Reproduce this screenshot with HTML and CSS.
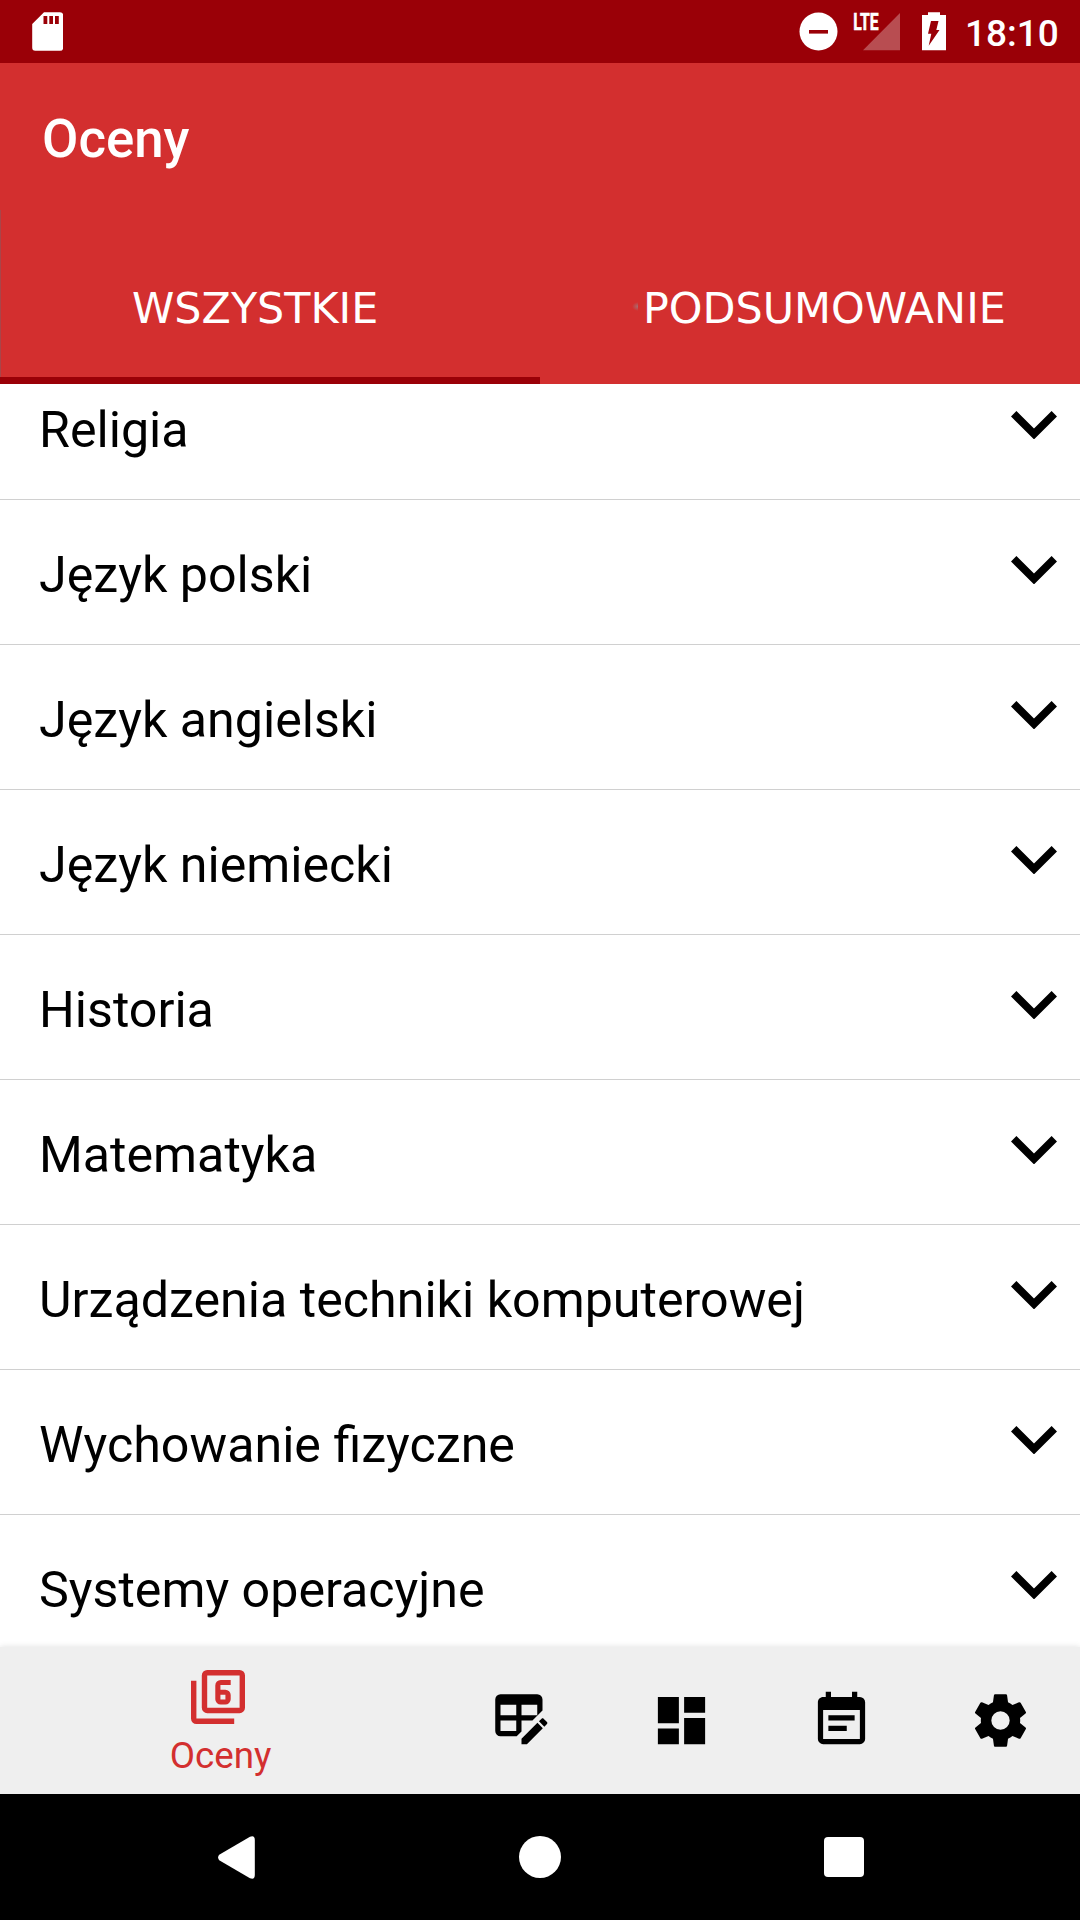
FILE: index.html
```html
<!DOCTYPE html>
<html lang="pl">
<head>
<meta charset="utf-8">
<title>Oceny</title>
<link rel="stylesheet" href="styles.css">
</head>
<body>
<svg class="defs" width="0" height="0" aria-hidden="true">
  <symbol id="chevron" viewBox="6 8.59 12 7.41"><path d="M7.41 8.59 12 13.17l4.59-4.58L18 10l-6 6-6-6z"/></symbol>
</svg>
<div class="screen">
  <header class="status">
    <svg class="status-sd" viewBox="32 12 31.3 39" width="31.3" height="39"><path fill="#fff" fill-rule="evenodd" d="M44 12.3H60Q63.200 12.300 63.200 15.500V47.500Q63.200 50.800 60 50.800H35.300Q32.200 50.800 32.200 47.500V24ZM43.500 16V24H47.300V16ZM49.300 16V24H53V16ZM55 16V24H58.800V16Z"/></svg>
    <svg class="status-icons" viewBox="799 2 148 59" width="148" height="59">
      <circle cx="818.5" cy="31.500" r="19" fill="#fff"/>
      <rect class="cut" x="809" y="30" width="19" height="3.600"/>
      <path d="M863 50.200H900V13Z" fill="#fff" fill-opacity=".3"/>
      <text class="lte" x="853.2" y="30" textLength="25.300" lengthAdjust="spacingAndGlyphs">LTE</text>
      <path fill="#fff" d="M928 15V12.300H940V15H946V50.200H922V15Z"/>
      <path class="cut" d="M931 21H938.500L936.300 30H939.500L928.700 45.800L931.300 33.800H928Z"/>
    </svg>
    <span class="clock">18:10</span>
  </header>
  <div class="appbar"><h1 class="title">Oceny</h1></div>
  <nav class="tabs">
    <div class="tab tab-active"><span class="tab-label">WSZYSTKIE</span></div>
    <div class="tab tab-summary"><span class="tab-label">PODSUMOWANIE</span></div>
  </nav>
  <main class="list">
    <div class="row"><span>Religia</span><svg class="chev"><use href="#chevron"/></svg></div>
    <div class="row"><span>Język polski</span><svg class="chev"><use href="#chevron"/></svg></div>
    <div class="row"><span>Język angielski</span><svg class="chev"><use href="#chevron"/></svg></div>
    <div class="row"><span>Język niemiecki</span><svg class="chev"><use href="#chevron"/></svg></div>
    <div class="row"><span>Historia</span><svg class="chev"><use href="#chevron"/></svg></div>
    <div class="row"><span>Matematyka</span><svg class="chev"><use href="#chevron"/></svg></div>
    <div class="row"><span>Urządzenia techniki komputerowej</span><svg class="chev"><use href="#chevron"/></svg></div>
    <div class="row"><span>Wychowanie fizyczne</span><svg class="chev"><use href="#chevron"/></svg></div>
    <div class="row"><span>Systemy operacyjne</span><svg class="chev"><use href="#chevron"/></svg></div>
  </main>
  <nav class="bottom">
    <div class="item item-active">
      <svg class="grades" viewBox="2 2 20 20"><path fill-rule="evenodd" d="M20 2H8A2 2 0 0 0 6 4V16A2 2 0 0 0 8 18H20A2 2 0 0 0 22 16V4A2 2 0 0 0 20 2M20 16H8V4H20ZM4 6H2V20A2 2 0 0 0 4 22H18V20H4ZM13 14.800H14.700A2 2 0 0 0 16.700 12.800V11.300A2 2 0 0 0 14.700 9.300H12.900V7.600H16.700V5.700H13A2 2 0 0 0 11 7.700V12.800A2 2 0 0 0 13 14.800M12.900 11.150H14.750V12.950H12.900Z"/></svg>
      <span class="item-label">Oceny</span>
    </div>
    <div class="item"><svg viewBox="0 0 24 24"><path d="M21.700 13.350L20.700 14.350L18.650 12.300L19.650 11.300C19.860 11.090 20.210 11.090 20.420 11.300L21.700 12.580C21.910 12.790 21.910 13.140 21.700 13.350M12 18.940L18.070 12.880L20.120 14.930L14.060 21H12V18.940M4 2H18A2 2 0 0 1 20 4V8.170L16.170 12H12V16.170L10.170 18H4A2 2 0 0 1 2 16V4A2 2 0 0 1 4 2M4 6V10H10V6H4M12 6V10H18V6H12M4 12V16H10V12H4Z"/></svg></div>
    <div class="item"><svg viewBox="0 0 24 24"><path d="M13 3V9H21V3M13 21H21V11H13M3 21H11V15H3M3 13H11V3H3V13Z"/></svg></div>
    <div class="item"><svg viewBox="0 0 24 24"><path d="M14 14H7V16H14M19 19H5V8H19M19 3H18V1H16V3H8V1H6V3H5C3.890 3 3 3.900 3 5V19A2 2 0 0 0 5 21H19A2 2 0 0 0 21 19V5A2 2 0 0 0 19 3M17 10H7V12H17V10Z"/></svg></div>
    <div class="item item-settings"><svg viewBox="0 0 24 24"><path d="M12,15.5A3.5,3.5 0 0,1 8.5,12A3.5,3.5 0 0,1 12,8.5A3.5,3.5 0 0,1 15.5,12A3.5,3.5 0 0,1 12,15.5M19.43,12.97C19.47,12.65 19.5,12.33 19.5,12C19.5,11.67 19.47,11.34 19.43,11L21.54,9.37C21.73,9.22 21.78,8.95 21.66,8.73L19.66,5.27C19.54,5.05 19.27,4.96 19.05,5.05L16.56,6.05C16.04,5.66 15.5,5.32 14.87,5.07L14.5,2.42C14.46,2.18 14.25,2 14,2H10C9.75,2 9.54,2.18 9.5,2.42L9.13,5.07C8.5,5.32 7.96,5.66 7.44,6.05L4.95,5.05C4.73,4.96 4.46,5.05 4.34,5.27L2.34,8.73C2.21,8.95 2.27,9.22 2.46,9.37L4.57,11C4.53,11.34 4.5,11.67 4.5,12C4.5,12.33 4.53,12.65 4.57,12.97L2.46,14.63C2.27,14.78 2.21,15.05 2.34,15.27L4.34,18.73C4.46,18.95 4.73,19.03 4.95,18.95L7.44,17.94C7.96,18.34 8.5,18.68 9.13,18.93L9.5,21.58C9.54,21.82 9.75,22 10,22H14C14.25,22 14.46,21.82 14.5,21.58L14.87,18.93C15.5,18.67 16.04,18.34 16.56,17.94L19.05,18.95C19.27,19.03 19.54,18.95 19.66,18.73L21.66,15.27C21.78,15.05 21.73,14.78 21.54,14.63L19.43,12.97Z"/></svg></div>
  </nav>
  <footer class="sysnav">
    <svg width="37" height="43" viewBox="0 0 37 43"><path fill="#fff" d="M1.200 18.800L32 .8Q36.800-1 36.800 4V39Q36.800 44 32 42.200L1.200 24.200Q-1 21.500 1.200 18.800Z"/></svg>
    <span class="home"></span>
    <span class="recent"></span>
  </footer>
</div>
</body>
</html>
```
FILE: styles.css
```css
* { box-sizing: border-box; }
body { margin: 0; font-family: Roboto, sans-serif; background: #fff; }
svg { display: block; flex: none; }
.defs { position: absolute; }
.screen {
  width: 1080px;
  height: 1920px;
  display: flex;
  flex-direction: column;
  overflow: hidden;
}
.status {
  flex: none;
  height: 63px;
  padding: 0 23px 0 32px;
  display: flex;
  align-items: center;
  background: #9a0007;
  color: #fff;
}
.status-icons { margin-left: auto; }
.cut { fill: #9a0007; }
.lte { fill: #fff; stroke: #fff; stroke-width: .6px; font: 700 23px Roboto, sans-serif; }
.clock {
  width: 92px;
  margin-left: 18px;
  font-size: 37px;
  font-weight: 500;
  line-height: 40px;
  white-space: nowrap;
  padding-top: 4px;
}
.appbar {
  flex: none;
  height: 147px;
  padding: 0 42px;
  display: flex;
  align-items: center;
  background: #d32f2f;
}
.title {
  margin: 0;
  padding-top: 4px;
  font-size: 52.8px;
  line-height: 62px;
  font-weight: 500;
  color: #fff;
}
.tabs {
  flex: none;
  height: 174px;
  display: grid;
  grid-template-columns: 1fr 1fr;
  background: #d32f2f;
  color: #fff;
  font-family: "DejaVu Sans", sans-serif;
  font-size: 42.85px;
  line-height: 50px;
}
.tab { padding: 73px 0 0 132px; }
.tab-active {
  border-bottom: 7px solid #9a0007;
  background: linear-gradient(#a94549, #a94549) left / 1px 100% no-repeat;
}
.tab-summary {
  padding-left: 103px;
  background: radial-gradient(ellipse at right, #a56f72, #d32f2f 70%) 92px 92px / 6px 9px no-repeat;
}
.list {
  flex: none;
  height: 1263px;
  display: flex;
  flex-direction: column;
  justify-content: flex-end;
  overflow: hidden;
  background: #fff;
}
.row {
  flex: none;
  height: 145px;
  padding: 0 23px 0 39px;
  display: flex;
  justify-content: space-between;
  align-items: flex-start;
  border-bottom: 1px solid #d0d0d0;
  font-size: 50.18px;
  line-height: 60px;
  color: #000;
}
.row > span { padding-top: 45px; }
.row:last-child { height: 132px; border: 0; }
.chev { width: 46px; height: 28.4px; margin-top: 56px; }
.bottom {
  flex: none;
  height: 147px;
  display: grid;
  grid-template-columns: 441px repeat(4, 160px);
  background: #efefef;
  box-shadow: 0 0 6px rgba(0, 0, 0, .13);
  position: relative;
}
.item { display: flex; align-items: center; justify-content: center; }
.item svg { width: 63px; height: 63px; }
.item-settings { padding-right: 2px; }
.item-active {
  flex-direction: column;
  justify-content: flex-start;
  padding-top: 23px;
  color: #d32f2f;
}
.item-active .grades { width: 54px; height: 54px; fill: currentColor; margin-right: 5px; }
.item-label { font-size: 36.75px; line-height: 42px; margin-top: 11px; }
.sysnav {
  flex: none;
  height: 126px;
  padding: 0 216px 0 217.500px;
  display: flex;
  align-items: center;
  justify-content: space-between;
  background: #000;
  position: relative;
}
.home { width: 42px; height: 42px; border-radius: 50%; background: #fff; margin-left: 1px; }
.recent { width: 40px; height: 40px; border-radius: 4px; background: #fff; }
```
